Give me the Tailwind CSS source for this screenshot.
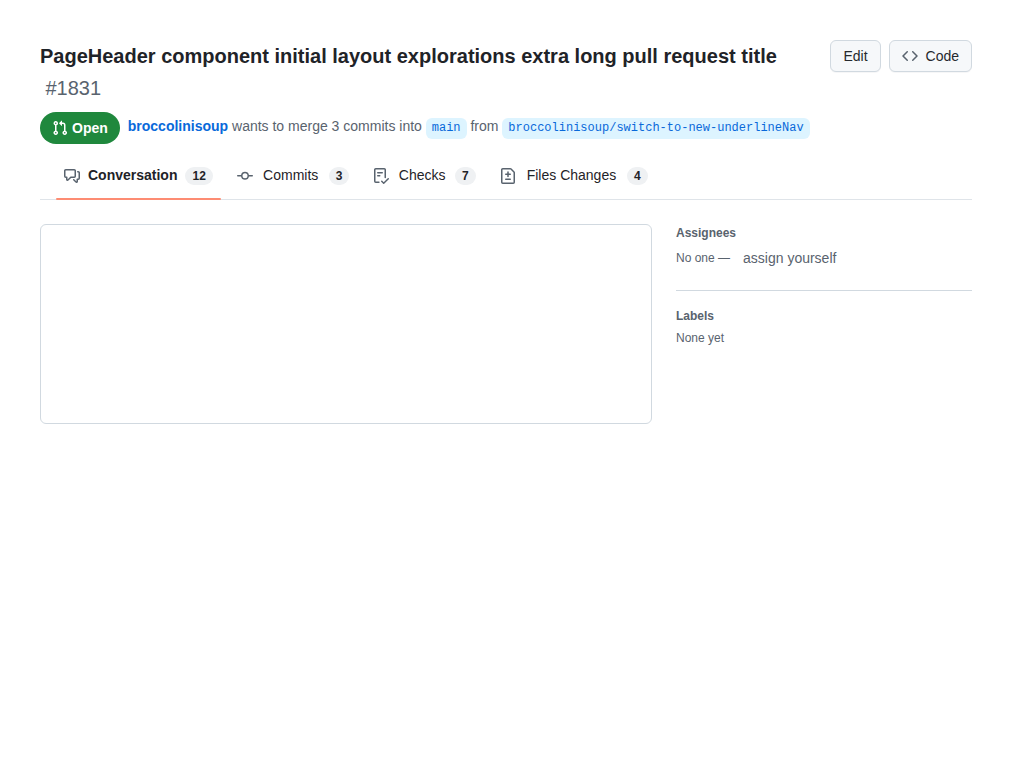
<!DOCTYPE html>
<html lang="en">
<head>
<meta charset="utf-8">
<title>Pull request</title>
<script src="https://cdn.jsdelivr.net/npm/@tailwindcss/browser@4"></script>
</head>
<body class="bg-white p-10 font-['Liberation_Sans',Arial,sans-serif] text-sm text-[#1f2328]">
<header>
  <div class="flex items-start justify-between gap-2">
    <h1 class="w-[782px] text-xl leading-8 font-semibold">PageHeader component initial layout explorations extra long pull request title <span class="block pl-[5.5px] font-normal text-[#59636e]">#1831</span></h1>
    <div class="flex gap-2">
      <button class="flex h-8 items-center rounded-md border border-[#d1d9e0] bg-[#f6f8fa] px-3 text-sm text-[#25292e] shadow-[0_1px_0_rgba(31,35,40,0.04)]">Edit</button>
      <button class="flex h-8 items-center gap-2 rounded-md border border-[#d1d9e0] bg-[#f6f8fa] px-3 text-sm text-[#25292e] shadow-[0_1px_0_rgba(31,35,40,0.04)]">
        <svg class="size-4 fill-[#59636e]" viewBox="0 0 16 16"><path d="m11.28 3.22 4.25 4.25a.75.75 0 0 1 0 1.06l-4.25 4.25a.749.749 0 0 1-1.275-.326.749.749 0 0 1 .215-.734L13.94 8l-3.72-3.72a.749.749 0 0 1 .326-1.275.749.749 0 0 1 .734.215Zm-6.56 0a.751.751 0 0 1 1.042.018.751.751 0 0 1 .018 1.042L2.06 8l3.72 3.72a.749.749 0 0 1-.326 1.275.749.749 0 0 1-.734-.215L.47 8.53a.75.75 0 0 1 0-1.06Z"/></svg>
        Code
      </button>
    </div>
  </div>
  <div class="mt-2 flex h-8 items-start gap-2">
    <span class="flex h-8 items-center gap-1 rounded-full bg-[#1f883d] px-3 font-semibold text-white">
      <svg class="size-4 fill-white" viewBox="0 0 16 16"><path d="M1.5 3.25a2.25 2.25 0 1 1 3 2.122v5.256a2.251 2.251 0 1 1-1.5 0V5.372A2.25 2.25 0 0 1 1.5 3.25Zm5.677-.177L9.573.677A.25.25 0 0 1 10 .854V2.5h1A2.5 2.5 0 0 1 13.5 5v5.628a2.251 2.251 0 1 1-1.5 0V5a1 1 0 0 0-1-1h-1v1.646a.25.25 0 0 1-.427.177L7.177 3.427a.25.25 0 0 1 0-.354ZM3.75 2.5a.75.75 0 1 0 0 1.5.75.75 0 0 0 0-1.5Zm0 9.5a.75.75 0 1 0 0 1.5.75.75 0 0 0 0-1.5Zm8.25.75a.75.75 0 1 0 1.5 0 .75.75 0 0 0-1.5 0Z"/></svg>
      Open
    </span>
    <p class="pt-1 leading-[21px] whitespace-nowrap text-[#59636e]"><a class="font-semibold text-[#0969da]">broccolinisoup</a> wants to merge 3 commits into <a class="inline-block h-[21px] rounded-md bg-[#ddf4ff] px-1.5 font-['Liberation_Mono',monospace] text-xs leading-[21px] text-[#0969da]">main</a> from <a class="inline-block h-[21px] rounded-md bg-[#ddf4ff] px-1.5 font-['Liberation_Mono',monospace] text-xs leading-[21px] text-[#0969da]">broccolinisoup/switch-to-new-underlineNav</a></p>
  </div>
  <nav class="mt-2 flex h-12 gap-2 border-b border-[#dfe4e9] px-4 leading-[21px]">
    <a class="relative -mb-px flex h-12 items-center gap-2 px-2 font-semibold after:absolute after:inset-x-0 after:bottom-0 after:h-0.5 after:rounded-md after:bg-[#fd8c73]">
      <svg class="size-4 fill-[#59636e]" viewBox="0 0 16 16"><path d="M1.75 1h8.5c.966 0 1.75.784 1.75 1.75v5.5A1.75 1.75 0 0 1 10.25 10H7.061l-2.574 2.573A1.458 1.458 0 0 1 2 11.543V10h-.25A1.75 1.75 0 0 1 0 8.25v-5.5C0 1.784.784 1 1.75 1ZM1.5 2.75v5.5c0 .138.112.25.25.25h1a.75.75 0 0 1 .75.75v2.19l2.72-2.72a.749.749 0 0 1 .53-.22h3.5a.25.25 0 0 0 .25-.25v-5.5a.25.25 0 0 0-.25-.25h-8.5a.25.25 0 0 0-.25.25Zm13 2a.25.25 0 0 0-.25-.25h-.5a.75.75 0 0 1 0-1.5h.5c.966 0 1.75.784 1.75 1.75v5.5A1.75 1.75 0 0 1 14.25 12H14v1.543a1.458 1.458 0 0 1-2.487 1.03L9.22 12.28a.749.749 0 0 1 .326-1.275.749.749 0 0 1 .734.215l2.22 2.22v-2.19a.75.75 0 0 1 .75-.75h1a.25.25 0 0 0 .25-.25Z"/></svg>
      <span class="pb-0.5">Conversation</span>
      <span class="flex h-[18px] items-center rounded-full bg-[#eff1f3] px-[7px] text-xs font-semibold">12</span>
    </a>
    <a class="flex h-12 items-center gap-2 px-2">
      <svg class="size-4 fill-[#59636e]" viewBox="0 0 16 16"><path d="M11.93 8.5a4.002 4.002 0 0 1-7.86 0H.75a.75.75 0 0 1 0-1.5h3.32a4.002 4.002 0 0 1 7.86 0h3.32a.75.75 0 0 1 0 1.5Zm-1.43-.75a2.5 2.5 0 1 0-5 0 2.5 2.5 0 0 0 5 0Z"/></svg>
      <span class="w-[59.8px] pb-0.5 text-center">Commits</span>
      <span class="flex h-[18px] items-center rounded-full bg-[#eff1f3] px-[7px] text-xs font-semibold">3</span>
    </a>
    <a class="flex h-12 items-center gap-2 px-2">
      <svg class="size-4 fill-[#59636e]" viewBox="0 0 16 16"><path d="M2.5 1.75v11.5c0 .138.112.25.25.25h3.17a.75.75 0 0 1 0 1.5H2.75A1.75 1.75 0 0 1 1 13.25V1.75C1 .784 1.784 0 2.75 0h8.5C12.216 0 13 .784 13 1.75v7.736a.75.75 0 0 1-1.5 0V1.75a.25.25 0 0 0-.25-.25h-8.5a.25.25 0 0 0-.25.25Zm13.274 9.537v-.001l-4.557 4.45a.75.75 0 0 1-1.055-.008l-1.943-1.95a.75.75 0 0 1 1.062-1.058l1.419 1.425 4.026-3.932a.75.75 0 1 1 1.048 1.074ZM4.75 4h4.5a.75.75 0 0 1 0 1.5h-4.5a.75.75 0 0 1 0-1.5ZM4 7.75A.75.75 0 0 1 4.75 7h2a.75.75 0 0 1 0 1.5h-2A.75.75 0 0 1 4 7.75Z"/></svg>
      <span class="w-[49.8px] pb-0.5 text-center">Checks</span>
      <span class="flex h-[18px] items-center rounded-full bg-[#eff1f3] px-[7px] text-xs font-semibold">7</span>
    </a>
    <a class="flex h-12 items-center gap-2 px-2">
      <svg class="size-4 fill-[#59636e]" viewBox="0 0 16 16"><path d="M1 1.75C1 .784 1.784 0 2.75 0h7.586c.464 0 .909.184 1.237.513l2.914 2.914c.329.328.513.773.513 1.237v9.586A1.75 1.75 0 0 1 13.25 16H2.75A1.75 1.75 0 0 1 1 14.25Zm1.75-.25a.25.25 0 0 0-.25.25v12.5c0 .138.112.25.25.25h10.5a.25.25 0 0 0 .25-.25V4.664a.25.25 0 0 0-.073-.177l-2.914-2.914a.25.25 0 0 0-.177-.073ZM8 3.25a.75.75 0 0 1 .75.75v1.5h1.5a.75.75 0 0 1 0 1.5h-1.5v1.5a.75.75 0 0 1-1.5 0V7h-1.5a.75.75 0 0 1 0-1.5h1.5V4A.75.75 0 0 1 8 3.25Zm-3 8a.75.75 0 0 1 .75-.75h4.5a.75.75 0 0 1 0 1.5h-4.5a.75.75 0 0 1-.75-.75Z"/></svg>
      <span class="w-[95.3px] pb-0.5 text-center">Files Changes</span>
      <span class="flex h-[18px] items-center rounded-full bg-[#eff1f3] px-[7px] text-xs font-semibold">4</span>
    </a>
  </nav>
</header>
<main class="mt-6 flex gap-6">
  <section class="h-[200px] flex-1 rounded-md border border-[#d1d9e0]"></section>
  <aside class="w-[296px] text-xs leading-[18px] text-[#59636e]">
    <h2 class="font-semibold">Assignees</h2>
    <div class="flex h-8 items-center"><span>No one —</span><a class="ml-[13px] text-sm">assign yourself</a></div>
    <hr class="my-4 border-[#d1d9e0]">
    <h2 class="font-semibold">Labels</h2>
    <p class="mt-1">None yet</p>
  </aside>
</main>
</body>
</html>
